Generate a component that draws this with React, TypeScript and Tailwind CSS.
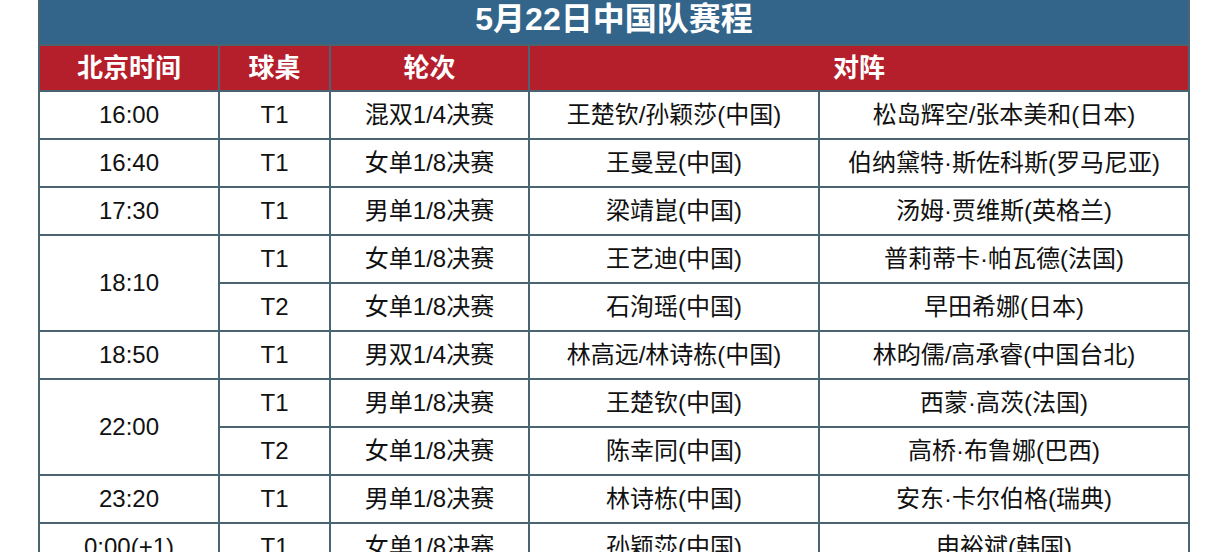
type Match = {
  time?: string
  span?: number
  table: string
  round: string
  home: string
  away: string
}

const matches: Match[] = [
  { time: "16:00", table: "T1", round: "混双1/4决赛", home: "王楚钦/孙颖莎(中国)", away: "松岛辉空/张本美和(日本)" },
  { time: "16:40", table: "T1", round: "女单1/8决赛", home: "王曼昱(中国)", away: "伯纳黛特·斯佐科斯(罗马尼亚)" },
  { time: "17:30", table: "T1", round: "男单1/8决赛", home: "梁靖崑(中国)", away: "汤姆·贾维斯(英格兰)" },
  { time: "18:10", span: 2, table: "T1", round: "女单1/8决赛", home: "王艺迪(中国)", away: "普莉蒂卡·帕瓦德(法国)" },
  { table: "T2", round: "女单1/8决赛", home: "石洵瑶(中国)", away: "早田希娜(日本)" },
  { time: "18:50", table: "T1", round: "男双1/4决赛", home: "林高远/林诗栋(中国)", away: "林昀儒/高承睿(中国台北)" },
  { time: "22:00", span: 2, table: "T1", round: "男单1/8决赛", home: "王楚钦(中国)", away: "西蒙·高茨(法国)" },
  { table: "T2", round: "女单1/8决赛", home: "陈幸同(中国)", away: "高桥·布鲁娜(巴西)" },
  { time: "23:20", table: "T1", round: "男单1/8决赛", home: "林诗栋(中国)", away: "安东·卡尔伯格(瑞典)" },
  { time: "0:00(+1)", table: "T1", round: "女单1/8决赛", home: "孙颖莎(中国)", away: "申裕斌(韩国)" },
]

const cell = "border-2 border-[#4a6472] text-center align-middle p-0 h-[48px]"
const head = "border-2 border-[#4a6472] text-center align-middle p-0 h-[46px] text-white font-bold text-[26px]"

export default function App() {
  return (
    <div
      className="h-[552px] w-[1230px] overflow-hidden bg-white pl-[38px]"
      style={{ fontFamily: '"Liberation Sans", "Noto Sans CJK SC", sans-serif' }}
    >
      <table className="w-[1152px] table-fixed border-collapse text-[24px] text-[#111]">
        <colgroup>
          <col className="w-[180px]" />
          <col className="w-[111px]" />
          <col className="w-[199px]" />
          <col className="w-[290px]" />
          <col className="w-[370px]" />
        </colgroup>
        <thead>
          <tr>
            <th colSpan={5} className="border-2 border-t-0 border-[#4a6472] bg-[#33648a] p-0">
              <div className="flex h-[44px] justify-center text-[32px] font-bold leading-[38px] text-white">
                5月22日中国队赛程
              </div>
            </th>
          </tr>
          <tr className="bg-[#b41f2b]">
            <th className={head}>北京时间</th>
            <th className={head}>球桌</th>
            <th className={head}>轮次</th>
            <th colSpan={2} className={head}>对阵</th>
          </tr>
        </thead>
        <tbody>
          {matches.map((m, i) => (
            <tr key={i}>
              {m.time && (
                <td rowSpan={m.span ?? 1} className={cell}>
                  {m.time}
                </td>
              )}
              <td className={cell}>{m.table}</td>
              <td className={cell}>{m.round}</td>
              <td className={cell}>{m.home}</td>
              <td className={cell}>{m.away}</td>
            </tr>
          ))}
        </tbody>
      </table>
    </div>
  )
}
